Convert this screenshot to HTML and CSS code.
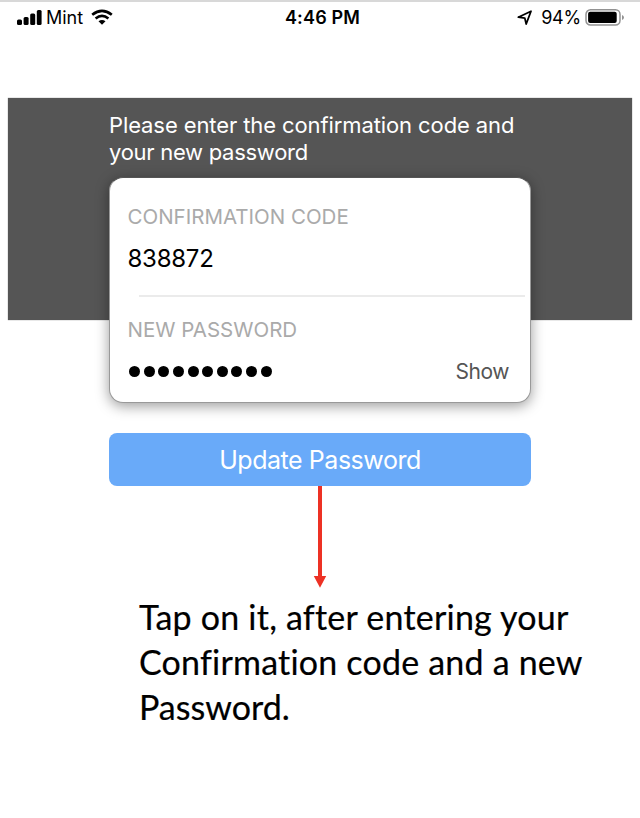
FILE: index.html
```html
<!DOCTYPE html>
<html lang="en">
<head>
<meta charset="utf-8">
<title>Update Password</title>
<link rel="stylesheet" href="styles.css">
</head>
<body>
<header class="status">
  <div class="carrier">
    <svg width="26" height="18" viewBox="0 0 26 18"><rect x="0" y="10.5" width="5" height="5.5" rx="1.5"/><rect x="6.6" y="8" width="5" height="8" rx="1.5"/><rect x="13.2" y="4.5" width="5" height="11.5" rx="1.5"/><rect x="19.8" y="1" width="4.8" height="15" rx="1.5"/></svg>
    <span class="network">Mint</span>
    <svg class="wifi" width="22" height="18" viewBox="0 0 22 18"><g fill="none" stroke="#000" stroke-width="2.7"><path d="M1.2 5.7Q11 -2 20.8 5.7"/><path d="M4.6 9.5Q11 4.4 17.4 9.5"/></g><path d="M7.5 12.2Q11 9.7 14.5 12.2L11 15.7Z"/></svg>
  </div>
  <time class="clock">4:46 PM</time>
  <div class="power">
    <svg width="16" height="16" viewBox="0 0 16 16"><path d="M1.3 7.2 14 1.3 9.2 14 7.8 8.1Z" fill="none" stroke="#000" stroke-width="1.8" stroke-linejoin="round"/></svg>
    <span class="percent">94%</span>
    <svg class="battery" width="40" height="18" viewBox="0 0 40 18"><rect x="1" y=".8" width="34" height="15.2" rx="4.5" fill="none" stroke="#929292" stroke-width="1.5"/><rect x="3.1" y="2.8" width="28.6" height="11.2" rx="2"/><path d="M37 5.9Q39 6.7 39 8.5T37 11.1Z" fill="#929292"/></svg>
  </div>
</header>
<main class="page">
  <section class="hero">
    <p class="intro"><span class="line intro-a">Please enter the confirmation code and</span><span class="line intro-b">your new password</span></p>
    <form class="card">
      <div class="label label-code">CONFIRMATION CODE</div>
      <div class="code">838872</div>
      <div class="divider"></div>
      <div class="label label-pass">NEW PASSWORD</div>
      <div class="password">
        <div class="dots"><i></i><i></i><i></i><i></i><i></i><i></i><i></i><i></i><i></i><i></i></div>
        <span class="show">Show</span>
      </div>
    </form>
  </section>
  <div class="update"><span class="update-text">Update Password</span></div>
  <svg class="arrow" width="14" height="102" viewBox="0 0 14 102"><path d="M5 0H9V90H13.2L7 101.7.8 90H5Z"/></svg>
  <p class="caption"><span class="line cap-a">Tap on it, after entering your</span><span class="line cap-b">Confirmation code and a new</span><span class="line cap-c">Password.</span></p>
</main>
</body>
</html>
```
FILE: styles.css
```css
* { box-sizing: border-box; }
body {
  margin: 0;
  height: 818px;
  overflow: hidden;
  background: #fff;
  color: #000;
  font-family: Inter, "Liberation Sans", sans-serif;
}
p { margin: 0; }
svg { display: block; flex: none; }
.line { display: block; white-space: nowrap; width: max-content; }
.status {
  display: grid;
  grid-template-columns: 1fr auto 1fr;
  height: 34px;
  padding: 0 15px 0 17px;
  border-top: 2px solid #d8d8d8;
  font-size: 18px;
  line-height: 32px;
}
.carrier, .power { display: flex; align-items: center; }
.network { margin-left: 3px; }
.wifi { margin-left: 8px; }
.clock { padding-left: 3px; font-weight: 600; letter-spacing: 0.15px; }
.power { justify-content: flex-end; }
.percent { margin: 0 4px 0 8px; letter-spacing: -0.2px; }
.page { padding: 64px 8px 0; }
.hero {
  height: 222px;
  padding: 14px 101px 0;
  background: #555;
  box-shadow: 0 0 1px #777;
}
.intro { height: 65px; color: #fff; font-size: 22px; line-height: 26.5px; }
.intro-a { letter-spacing: -0.1px; }
.intro-b { letter-spacing: -0.28px; }
.card {
  height: 226px;
  width: 422px;
  padding: 27px 5px 0 18px;
  background: #fff;
  border: 1px solid #999;
  border-top-color: #555;
  border-radius: 14px;
  box-shadow: 0 3px 14px rgba(0, 0, 0, 0.4);
}
.label { margin-left: -0.5px; color: #aaa; font-size: 20.5px; line-height: 24px; white-space: nowrap; }
.code { margin-top: 15px; margin-left: -0.5px; font-size: 24px; line-height: 30px; letter-spacing: -0.25px; }
.divider { height: 2px; margin: 21px 0 0 11px; background: #ebebeb; }
.label-pass { margin-top: 21px; }
.password { display: flex; align-items: center; justify-content: space-between; margin-top: 15px; padding-right: 16px; height: 28px; }
.dots { display: flex; gap: 3.65px; padding-left: 1px; }
.dots i { width: 11px; height: 11px; border-radius: 50%; background: #000; }
.show { color: #555; font-size: 21px; letter-spacing: -0.45px; }
.update {
  display: flex;
  align-items: center;
  justify-content: center;
  height: 53px;
  width: 422px;
  margin: 113px 0 0 101px;
  border-radius: 8px;
  background: #69aaf9;
  color: #fff;
  font-size: 25px;
  letter-spacing: -0.45px;
}
.arrow { margin-left: 305px; fill: #ed3124; }
.caption {
  margin: 6px 0 0 131px;
  font-family: Lato, "Liberation Sans", sans-serif;
  font-size: 34px;
  line-height: 45px;
  font-variant-ligatures: none;
  -webkit-text-stroke: 0.2px #000;
}
.cap-a { letter-spacing: 0.22px; }
.cap-b { letter-spacing: 0.2px; }
```
